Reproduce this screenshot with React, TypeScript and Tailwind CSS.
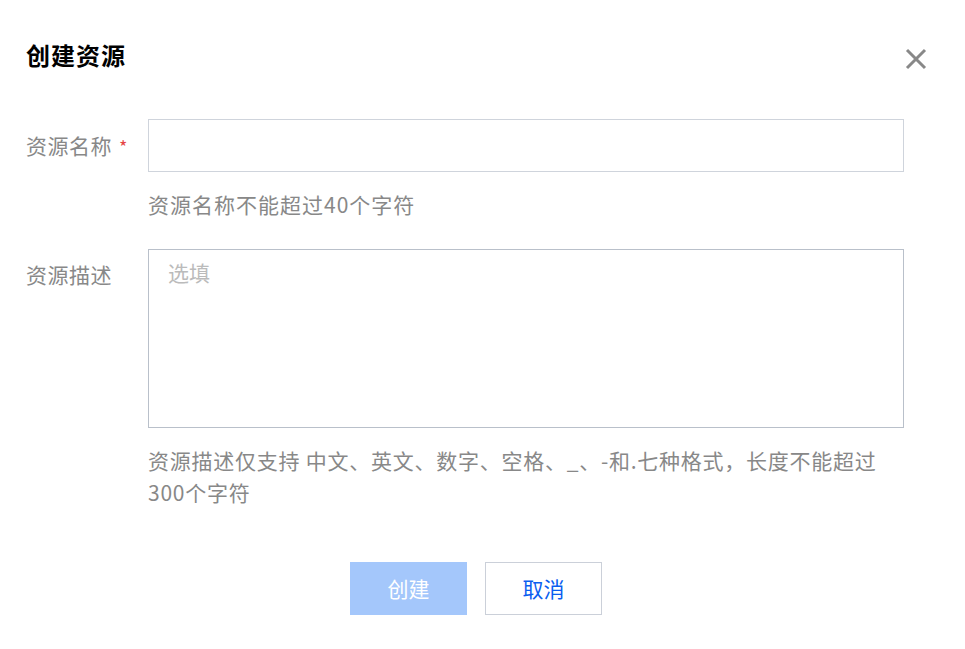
export default function App() {
  const font = { fontFamily: '"Noto Sans CJK SC", "Noto Sans", sans-serif' };
  return (
    <div className="w-[965px] h-[649px] bg-white relative" style={font}>
      {/* header */}
      <div className="flex items-center justify-between pl-[26px] pr-[37px] pt-[39px]">
        <h1 className="text-[24px] leading-[32px] font-bold tracking-[1px] text-black">创建资源</h1>
        <button className="w-[24px] h-[24px] flex items-center justify-center text-[#888888] mt-[8px]">
          <svg width="22" height="22" viewBox="0 0 22 22" fill="none">
            <path d="M2 2L20 20M20 2L2 20" stroke="currentColor" strokeWidth="3" />
          </svg>
        </button>
      </div>

      {/* form */}
      <div className="pl-[26px] pt-[48px] flex flex-col">
        <div className="flex">
          <div className="w-[122px] h-[53px] flex items-center text-[21px] tracking-[0.5px] text-[#888888]">
            资源名称
            <span className="text-[#e54545] text-[18px] ml-[7px] mt-[2px]">*</span>
          </div>
          <div className="flex flex-col">
            <input className="w-[756px] h-[53px] border border-[#cfd4dc] outline-none px-[19px] text-[21px]" />
            <p className="mt-[16px] text-[21px] leading-[32px] tracking-[1px] text-[#888888]">资源名称不能超过40个字符</p>
          </div>
        </div>

        <div className="flex mt-[29px]">
          <div className="w-[122px] pt-[9px] text-[21px] leading-[32px] tracking-[0.5px] text-[#888888]">资源描述</div>
          <div className="flex flex-col">
            <textarea
              placeholder="选填"
              className="w-[756px] h-[179px] border border-[#b9c0ca] outline-none resize-none px-[19px] pt-[6px] pb-[8px] text-[21px] leading-[32px] placeholder:text-[#bbbbbb]"
            />
            <p className="mt-[16px] w-[756px] text-[21px] leading-[32px] tracking-[0.75px] text-[#888888]">
              资源描述仅支持 中文、英文、数字、空格、_、-和.七种格式，长度不能超过
              <br />
              300个字符
            </p>
          </div>
        </div>
      </div>

      {/* footer */}
      <div className="flex justify-center gap-[18px] pr-[13px] mt-[54px]">
        <button className="w-[117px] h-[53px] bg-[#a4c7fb] text-white text-[21px]">创建</button>
        <button className="w-[117px] h-[53px] border border-[#cbd0d9] bg-white text-[#0a5ef0] text-[21px]">取消</button>
      </div>
    </div>
  );
}
